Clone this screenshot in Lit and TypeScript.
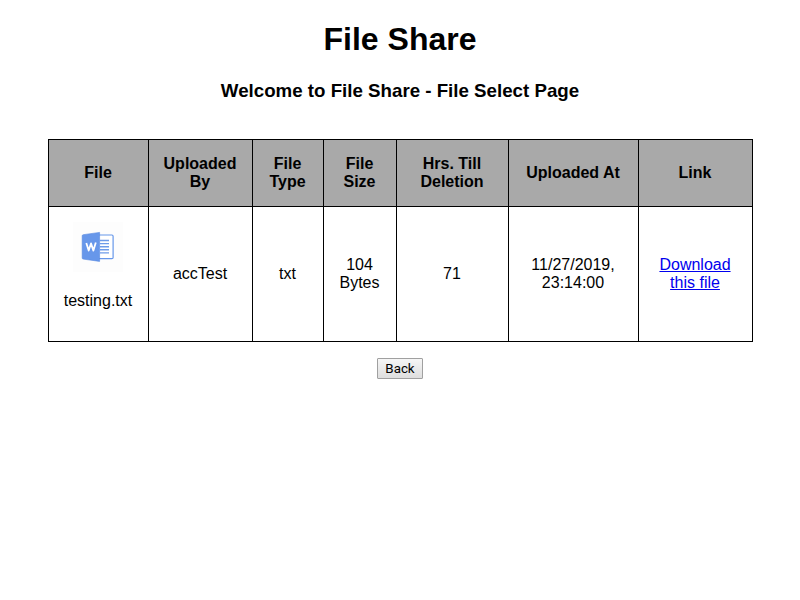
import { LitElement, html, css } from "lit";
import { customElement } from "lit/decorators.js";

@customElement("app-root")
export class AppRoot extends LitElement {
  static styles = css`
    :host { display: flex; flex-direction: column; align-items: center; height: 600px; background: #fff; color: #000; font: 16px/18px "Liberation Sans", Arial, sans-serif; text-align: center; }
    h1 { margin: 21px 0 0; font-size: 32px; line-height: 37px; }
    h3 { margin: 22px 0 0; font-size: 18.72px; line-height: 22px; }
    table { margin-top: 37px; width: 705px; table-layout: fixed; border-collapse: collapse; }
    th, td { border: 1px solid #000; padding: 0 10px; box-sizing: border-box; }
    th { background: #a9a9a9; }
    .head { height: 67px; }
    .row { height: 135px; }
    .file { padding: 0; }
    .icon { display: block; width: 50px; height: 50px; margin: 0 auto 20px; background: #fdfdfd; }
    .name { display: block; margin-bottom: 16px; }
    a { color: #0000ee; text-decoration: underline; }
    button { margin-top: 16px; width: 46px; height: 21px; padding: 0; border: 1px solid #a0a0a0; border-radius: 1px; background: linear-gradient(#f6f6f6, #dedede); color: #000; font: 13.33px/17px Roboto, "Liberation Sans", Arial, sans-serif; }
  `;

  render() {
    return html`
      <h1>File Share</h1>
      <h3>Welcome to File Share - File Select Page</h3>
      <table>
        <colgroup>
          ${[100, 104, 71, 73, 112, 130, 114].map((w) => html`<col style="width:${w}px" />`)}
        </colgroup>
        <tr class="head">
          <th>File</th><th>Uploaded<br />By</th><th>File<br />Type</th><th>File<br />Size</th>
          <th>Hrs. Till<br />Deletion</th><th>Uploaded At</th><th>Link</th>
        </tr>
        <tr class="row">
          <td class="file">
            <svg class="icon" viewBox="0 0 50 50" fill="none">
              <rect x="24" y="13" width="16.1" height="23.6" rx="1.2" fill="#fff" stroke="#6797ea" stroke-width="1.2" />
              <path d="M27 18.5h9M27 21.6h9M27 24.7h9M27 27.8h9M27 30.9h9" stroke="#6f9ce9" stroke-width="1.4" />
              <path d="M10.2 12.7L26.6 10.4V39.4L10.2 37.1Q9.2 37 9.2 36V13.8Q9.2 12.9 10.2 12.7Z" fill="#6797ea" stroke="#5688e0" stroke-width=".6" />
              <path d="M13.3 21L15.7 28.6L18 21.4L20.4 28.6L22.8 20.6" stroke="#fff" stroke-width="1.8" stroke-linejoin="round" />
            </svg>
            <span class="name">testing.txt</span>
          </td>
          <td>accTest</td><td>txt</td><td>104<br />Bytes</td><td>71</td>
          <td>11/27/2019,<br />23:14:00</td>
          <td><a href="#">Download<br />this file</a></td>
        </tr>
      </table>
      <button>Back</button>
    `;
  }
}
